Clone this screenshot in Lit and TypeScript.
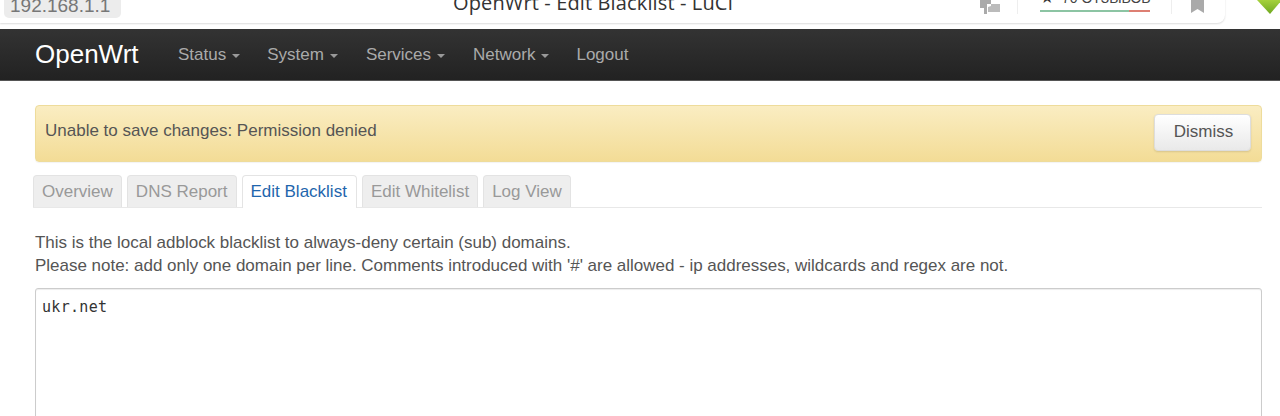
import { LitElement, html, css } from "lit";
import { customElement } from "lit/decorators.js";

@customElement("app-root")
export class AppRoot extends LitElement {
  static styles = css`
    :host { display: block; width: 1280px; height: 416px; overflow: hidden; background: #fff; font-family: "Liberation Sans", Arial, sans-serif; position: relative; }
    .browser { height: 29px; position: relative; overflow: hidden; }
    .toolbar { position: absolute; left: 0; top: -30px; width: 1225px; height: 53px; border-radius: 0 0 8px 0; background: #fff; box-shadow: 0 1px 2px rgba(0,0,0,.14); }
    .url { position: absolute; left: 4px; top: -10px; width: 117px; height: 28px; background: #ececec; border-radius: 5px; color: #777; font-size: 19px; line-height: 32px; padding-left: 6px; box-sizing: border-box; }
    .title { position: absolute; left: 453px; top: -9px; font-family: "Open Sans", sans-serif; font-size: 20px; line-height: 24px; letter-spacing: .13px; color: #333; white-space: nowrap; }
    .ico { position: absolute; }
    .sep { position: absolute; top: 0; width: 1px; height: 14px; background: #eee; }
    .rating { position: absolute; left: 1040px; top: -11px; font-size: 14px; line-height: 18px; color: #444; white-space: nowrap; display: flex; gap: 8px; }
    .star { font-size: 16px; color: #333; }
    .bar { position: absolute; left: 1040px; top: 10px; width: 110px; height: 2px; display: flex; }
    .bar .g { flex: 0 0 89px; background: #8cc4a3; }
    .bar .r { flex: 1; background: #dd7f73; }
    nav { height: 52px; box-sizing: border-box; background: linear-gradient(#333 0%, #222 100%); border-bottom: 1px solid #555; display: flex; align-items: center; padding-left: 35px; }
    .brand { color: #fff; font-size: 26px; width: 143px; }
    .menu { display: flex; color: #aaa; font-size: 17px; }
    .item { display: flex; align-items: center; white-space: nowrap; }
    .caret { width: 0; height: 0; border: 4.5px solid transparent; border-top-color: #999; border-bottom: 0; margin-left: 6px; margin-top: 2px; }
    main { padding: 24px 18px 0 35px; }
    .alert { height: 57px; box-sizing: border-box; background: linear-gradient(#faedc2, #f3dc96); border: 1px solid #eedc9b; border-radius: 4px; color: #555; font-size: 17px; display: flex; justify-content: space-between; padding: 8px 10px 0 9px; box-shadow: 0 1px 1px rgba(0,0,0,.05); }
    .msg { line-height: 25px; padding-top: 4px; }
    .dismiss { width: 97px; height: 37px; box-sizing: border-box; background: linear-gradient(#fff, #e9e9e9); border: 1px solid #ddd; border-radius: 4px; color: #555; font: 17px "Liberation Sans", Arial, sans-serif; box-shadow: 0 1px 2px rgba(0,0,0,.12); padding: 0 0 2px 2px; }
    .tabs { display: flex; gap: 5px; margin: 13px 0 0 -2px; height: 32px; border-bottom: 1px solid #e8e8e8; }
    .tab { height: 32px; box-sizing: border-box; padding: 0 8px; background: #eee; border: 1px solid #e3e3e3; border-bottom: 0; border-radius: 4px 4px 0 0; color: #999; font-size: 17px; line-height: 31px; white-space: nowrap; }
    .tab.active { background: #fff; color: #1f66ad; border-color: #e4e4e4; height: 33px; padding-right: 9px; }
    .desc { margin: 23px 0 0; color: #555; font-size: 17px; line-height: 23px; letter-spacing: -.015px; white-space: nowrap; }
    .ta { margin-top: 11px; height: 160px; box-sizing: border-box; border: 1px solid #ccc; border-radius: 3px; box-shadow: inset 0 1px 1px rgba(0,0,0,.075); padding: 8px 6px; font-family: "DejaVu Sans Mono", monospace; font-size: 15px; letter-spacing: .3px; line-height: 20px; color: #333; }
  `;

  render() {
    const menu = ["Status", "System", "Services", "Network"];
    const gaps = [27, 28, 28, 27];
    const tabs = ["Overview", "DNS Report", "Edit Blacklist", "Edit Whitelist", "Log View"];
    return html`
      <div class="browser">
        <div class="toolbar"></div>
        <div class="url">192.168.1.1</div>
        <div class="title">OpenWrt - Edit Blacklist - LuCI</div>
        <svg class="ico" style="left:980px;top:0" width="20" height="14" viewBox="0 0 20 14">
          <path d="M0 0h11v4h-4v10H4V8H0z" fill="#aaa"/>
          <path d="M8 7l3-1V4h9v8h-12z" fill="#bbb"/>
        </svg>
        <div class="sep" style="left:1017px"></div>
        <div class="rating"><span class="star">★</span><span>70 ОТЗЫВОВ</span></div>
        <div class="bar"><div class="g"></div><div class="r"></div></div>
        <div class="sep" style="left:1171px"></div>
        <svg class="ico" style="left:1191px;top:0" width="13" height="13" viewBox="0 0 13 13">
          <path d="M0 0h13v13l-6.5-4L0 13z" fill="#aaa"/>
        </svg>
        <svg class="ico" style="left:1255px;top:0" width="25" height="15" viewBox="0 0 25 15">
          <defs>
            <linearGradient id="dl" x1="0" y1="0" x2="0" y2="1">
              <stop offset="0" stop-color="#a5d13c"/>
              <stop offset="1" stop-color="#6fa821"/>
            </linearGradient>
          </defs>
          <path d="M2 0h25v0L15 14z" fill="url(#dl)"/>
        </svg>
      </div>
      <nav>
        <div class="brand">OpenWrt</div>
        <div class="menu">
          ${menu.map((m, i) => html`<span class="item" style="margin-right:${gaps[i]}px">${m}<span class="caret"></span></span>`)}
          <span class="item">Logout</span>
        </div>
      </nav>
      <main>
        <div class="alert">
          <div class="msg">Unable to save changes: Permission denied</div>
          <button class="dismiss">Dismiss</button>
        </div>
        <div class="tabs">
          ${tabs.map((t, i) => html`<div class="tab ${i === 2 ? "active" : ""}">${t}</div>`)}
        </div>
        <p class="desc">This is the local adblock blacklist to always-deny certain (sub) domains.<br />Please note: add only one domain per line. Comments introduced with '#' are allowed - ip addresses, wildcards and regex are not.</p>
        <div class="ta">ukr.net</div>
      </main>
    `;
  }
}
